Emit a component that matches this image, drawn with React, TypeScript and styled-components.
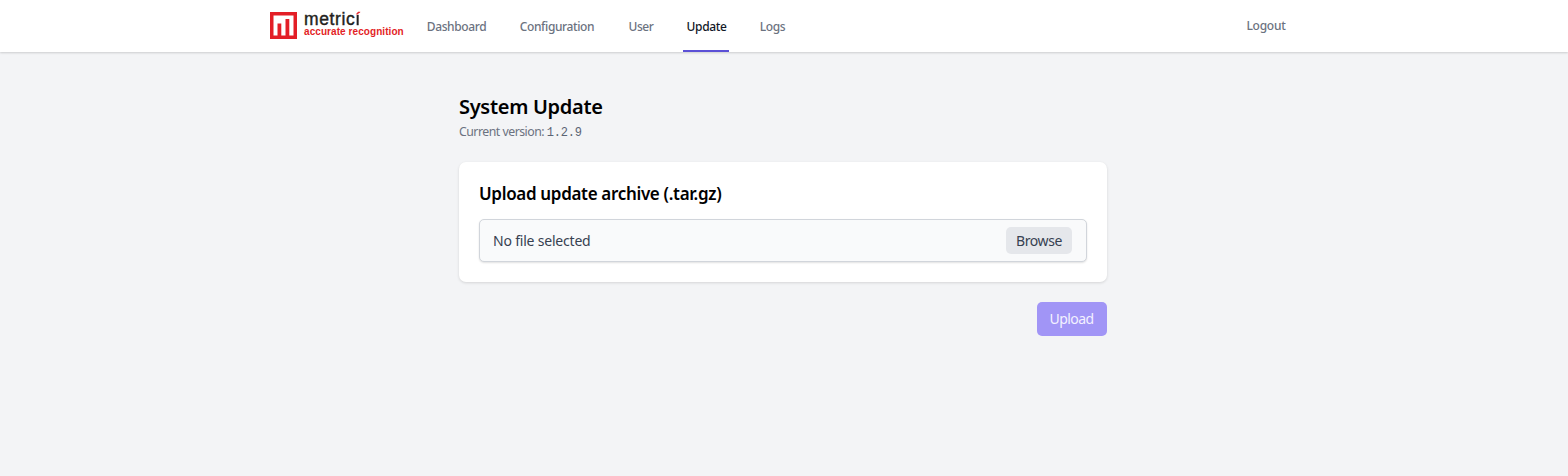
import React from 'react';
import styled, { createGlobalStyle } from 'styled-components';

const GlobalStyle = createGlobalStyle`
  *, *::before, *::after {
    box-sizing: border-box;
  }
  body {
    margin: 0;
    min-height: 100vh;
    background: #f3f4f6;
    color: #000;
    font-family: 'Noto Sans', sans-serif;
  }
  h1, h2, p {
    margin: 0;
  }
`;

const Header = styled.header`
  height: 52px;
  background: #fff;
  box-shadow: 0 1px 2px rgba(0, 0, 0, 0.16);
`;

const HeaderInner = styled.div`
  display: flex;
  width: 1028px;
  height: 100%;
  margin: 0 auto;
`;

const Brand = styled.div`
  display: flex;
  width: 153px;
  padding-top: 12px;
`;

const BrandText = styled.div`
  margin-left: 7px;
  font-family: 'Liberation Sans', sans-serif;
  white-space: nowrap;
`;

const BrandName = styled.div`
  color: #231f20;
  font-size: 17.5px;
  line-height: 15px;
  letter-spacing: 0.6px;
  -webkit-text-stroke: 0.4px #231f20;
`;

// only the accent of the last letter is red
const Accent = styled.span`
  color: transparent;
  background: linear-gradient(#e31e26 6px, #231f20 6px);
  background-clip: text;
  -webkit-text-stroke: 0.4px transparent;
`;

const Tagline = styled.div`
  color: #e31e26;
  font-size: 10px;
  font-weight: 700;
  line-height: 10px;
  letter-spacing: 0.07px;
`;

const Nav = styled.nav`
  display: flex;
  flex: 1;
  gap: 26px;
`;

const NavLink = styled.a<{ $width: number; $active?: boolean }>`
  display: flex;
  justify-content: center;
  width: ${({ $width }) => $width}px;
  height: 52px;
  padding: 1px 0 0 1px;
  border-bottom: 2px solid ${({ $active }) => ($active ? '#5b50d6' : 'transparent')};
  color: ${({ $active }) => ($active ? '#111827' : '#6b7280')};
  font-size: 12px;
  font-weight: 500;
  line-height: 51px;
  letter-spacing: -0.38px;
  white-space: nowrap;
  text-decoration: none;
`;

const Logout = styled(NavLink)`
  margin-right: 12px;
  padding-left: 0;
  line-height: 50px;
  letter-spacing: -0.25px;
`;

const Main = styled.main`
  width: 648px;
  margin: 43px auto 0;
  transform: translateX(-1px);
`;

const Title = styled.h1`
  font-size: 20px;
  font-weight: 600;
  line-height: 24px;
  letter-spacing: -0.3px;
`;

const Version = styled.p`
  margin-top: 4px;
  color: #6b7280;
  font-size: 12.3px;
  line-height: 17px;
  letter-spacing: -0.5px;
`;

const VersionNumber = styled.span`
  color: #5b6474;
  font-family: 'Liberation Mono', monospace;
  font-size: 12px;
  letter-spacing: -0.2px;
`;

const Card = styled.section`
  height: 120px;
  margin-top: 20px;
  padding: 20px;
  border-radius: 7px;
  background: #fff;
  box-shadow: 0 1px 3px rgba(0, 0, 0, 0.13);
`;

const CardTitle = styled.h2`
  font-size: 17px;
  font-weight: 600;
  line-height: 24px;
  letter-spacing: -0.33px;
`;

const FileField = styled.div`
  display: flex;
  align-items: center;
  justify-content: space-between;
  height: 43px;
  margin-top: 13px;
  padding: 0 14px 0 13px;
  border: 1px solid #d1d5db;
  border-radius: 5px;
  background: #f9fafb;
  box-shadow: 0 1px 2px rgba(0, 0, 0, 0.12);
  color: #374151;
  font-size: 14px;
  letter-spacing: -0.2px;
`;

const Browse = styled.button`
  width: 66px;
  height: 27px;
  padding: 0;
  border: 0;
  border-radius: 5px;
  background: #e5e7eb;
  color: #374151;
  font: inherit;
  letter-spacing: -0.4px;
`;

const Actions = styled.div`
  display: flex;
  justify-content: flex-end;
  margin-top: 20px;
`;

const Upload = styled.button`
  width: 70px;
  height: 34px;
  padding: 0 1px 1px 0;
  border: 0;
  border-radius: 5px;
  background: #a195f6;
  color: #f3f1ff;
  font: 400 14px 'Noto Sans', sans-serif;
  letter-spacing: -0.55px;
`;

const links = [
    { label: 'Dashboard', width: 66 },
    { label: 'Configuration', width: 83 },
    { label: 'User', width: 33 },
    { label: 'Update', width: 46, active: true },
    { label: 'Logs', width: 34 },
];

const Logo: React.FC = () => (
    <svg width="27" height="27" viewBox="0 0 27 27" fill="none">
        <path d="M1.75 1.75h23.5v23.5H1.75z" stroke="#e31e26" strokeWidth="3.5" />
        <path d="M9.4 24V11.5M17.4 24V7" stroke="#e31e26" strokeWidth="3.8" />
    </svg>
);

const App: React.FC = () => {
    return (
        <>
            <GlobalStyle />
            <Header>
                <HeaderInner>
                    <Brand>
                        <Logo />
                        <BrandText>
                            <BrandName>metric<Accent>í</Accent></BrandName>
                            <Tagline>accurate recognition</Tagline>
                        </BrandText>
                    </Brand>
                    <Nav>
                        {links.map(({ label, width, active }) => (
                            <NavLink key={label} $width={width} $active={active}>
                                {label}
                            </NavLink>
                        ))}
                    </Nav>
                    <Logout $width={40}>Logout</Logout>
                </HeaderInner>
            </Header>
            <Main>
                <Title>System Update</Title>
                <Version>
                    Current version: <VersionNumber>1.2.9</VersionNumber>
                </Version>
                <Card>
                    <CardTitle>Upload update archive (.tar.gz)</CardTitle>
                    <FileField>
                        <span>No file selected</span>
                        <Browse type="button">Browse</Browse>
                    </FileField>
                </Card>
                <Actions>
                    <Upload type="button">Upload</Upload>
                </Actions>
            </Main>
        </>
    );
};

export default App;
